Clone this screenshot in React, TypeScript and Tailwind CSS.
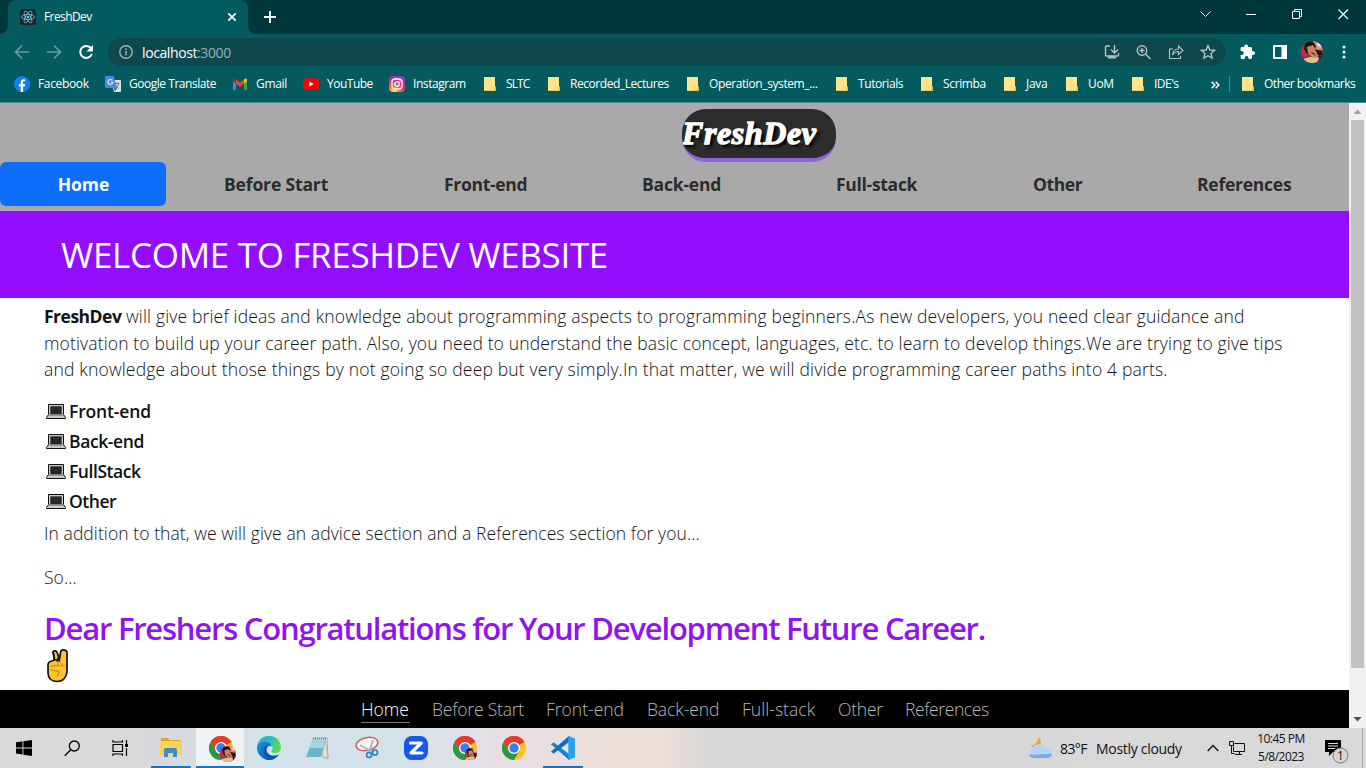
import React, { ReactNode } from 'react';

const bookmarks: { label: string; cls: string; icon: string; text: string }[] = [
  { label: 'Facebook', cls: 'w-[91px]', icon: 'fb', text: 'tracking-[-0.35px]' },
  { label: 'Google Translate', cls: 'w-[127px]', icon: 'gt', text: 'tracking-[-0.47px]' },
  { label: 'Gmail', cls: 'w-[71px]', icon: 'gm', text: 'tracking-[-0.3px]' },
  { label: 'YouTube', cls: 'w-[86px]', icon: 'yt', text: 'tracking-[-0.5px]' },
  { label: 'Instagram', cls: 'w-[93px]', icon: 'ig', text: 'tracking-[-0.43px]' },
  { label: 'SLTC', cls: 'w-[64px]', icon: 'folder', text: 'tracking-[-0.9px]' },
  { label: 'Recorded_Lectures', cls: 'w-[139px]', icon: 'folder', text: 'tracking-[-0.45px]' },
  { label: 'Operation_system_...', cls: 'w-[149px]', icon: 'folder', text: 'tracking-[-0.4px]' },
  { label: 'Tutorials', cls: 'w-[85px]', icon: 'folder', text: 'tracking-[-0.42px]' },
  { label: 'Scrimba', cls: 'w-[83px]', icon: 'folder', text: 'tracking-[-0.35px]' },
  { label: 'Java', cls: 'w-[62px]', icon: 'folder', text: 'tracking-[-0.3px]' },
  { label: 'UoM', cls: 'w-[66px]', icon: 'folder', text: 'tracking-[-0.3px]' },
  { label: "IDE's", cls: 'w-[79px]', icon: 'folder', text: 'tracking-[-0.5px]' },
];

function Folder() {
  return (
    <svg width="16" height="16" viewBox="0 0 16 16" className="shrink-0">
      <path d="M2 1h11v10.500l1-1V15H2z" fill="#ffe48b" />
      <path d="M2 14h10.500v1H2z" fill="#f5cd62" />
      <path d="M12 14l1-3.500h1V15h-2z" fill="#eebe48" />
    </svg>
  );
}

function BookmarkIcon({ kind }: { kind: string }) {
  if (kind === 'fb')
    return (
      <svg width="16" height="16" viewBox="0 0 16 16" className="shrink-0">
        <circle cx="8" cy="8" r="8" fill="#1280f5" />
        <path d="M6.700 16V10.400H4.900V8h1.800V6.300c0-2 1.100-3.100 2.900-3.100.8 0 1.500.1 1.500.1v1.900h-.9c-.9 0-1.200.5-1.200 1.200V8h2l-.4 2.400H9.100V16z" fill="#fff" />
      </svg>
    );
  if (kind === 'gt')
    return (
      <svg width="16" height="16" viewBox="0 0 16 16" className="shrink-0">
        <path d="M6 4h9a1 1 0 0 1 1 1v10a1 1 0 0 1-1 1H9z" fill="#e1e3e6" />
        <path d="M9.500 7.500h5M12 6v1.500M13.700 7.500c-.4 2.500-1.700 4-3.400 5M10.500 8.500c.8 2 2 3 3.500 4" stroke="#727981" fill="none" />
        <path d="M1 0h7.500l3.500 12H1a1 1 0 0 1-1-1V1a1 1 0 0 1 1-1z" fill="#4c84e8" />
        <path d="M7.300 4.300a2.500 2.500 0 1 0 .6 2H5.600" stroke="#e9f0ff" strokeWidth="1.100" fill="none" />
        <path d="M9 12h3l-2 3.500z" fill="#2759b8" />
      </svg>
    );
  if (kind === 'gm')
    return (
      <svg width="16" height="16" viewBox="0 0 16 16" className="shrink-0">
        <path d="M1 3.500V14h3V7z" fill="#4285f4" />
        <path d="M12 7v7h3V3.500z" fill="#34a853" />
        <path d="M4 3.500v4.300l4 3.200 4-3.200V3.500L8 6.600z" fill="#ea4335" />
        <path d="M1 4c0-2 1.700-1.800 3-.7v4.500L1 5.500z" fill="#c5221f" />
        <path d="M15 4c0-2-1.700-1.800-3-.7v4.500l3-2.300z" fill="#fbbc04" />
      </svg>
    );
  if (kind === 'yt')
    return (
      <svg width="16" height="16" viewBox="0 0 16 16" className="shrink-0">
        <rect x="0" y="2.300" width="16" height="11.400" rx="3" fill="#f00" />
        <path d="M6.300 5.500v5L10.700 8z" fill="#fff" />
      </svg>
    );
  if (kind === 'ig')
    return (
      <svg width="16" height="16" viewBox="0 0 16 16" className="shrink-0">
        <defs>
          <radialGradient id="ig" cx="0.3" cy="1" r="1.100">
            <stop offset="0.05" stopColor="#fed859" />
            <stop offset="0.350" stopColor="#fb6a3a" />
            <stop offset="0.600" stopColor="#dc2e79" />
            <stop offset="1" stopColor="#7a3bd0" />
          </radialGradient>
        </defs>
        <rect width="16" height="16" rx="4" fill="url(#ig)" />
        <rect x="3" y="3" width="10" height="10" rx="3" fill="none" stroke="#fff" strokeWidth="1.300" />
        <circle cx="8" cy="8" r="2.300" fill="none" stroke="#fff" strokeWidth="1.300" />
        <circle cx="11" cy="5" r=".7" fill="#fff" />
      </svg>
    );
  return <Folder />;
}

function Avatar({ size, id }: { size: number; id: string }) {
  return (
    <svg width={size} height={size} viewBox="0 0 22 22" className="shrink-0">
      <clipPath id={id}>
        <circle cx="11" cy="11" r="11" />
      </clipPath>
      <g clipPath={`url(#${id})`}>
        <rect width="22" height="22" fill="#8f2f33" />
        <path d="M0 6h6v10H0z" fill="#c9284f" />
        <path d="M12 0h10v9h-8z" fill="#d98779" />
        <path d="M4 3c3-4 10-3 11 3l-4 2-5 5-3-5z" fill="#24130f" />
        <path d="M6 6l6-2 4 7 2 6-5 1-6-6z" fill="#c78460" />
        <path d="M14 8l6 2 2 4-5 0z" fill="#1b1413" />
        <path d="M9 11l4 1 2 3z" fill="#3a1b15" />
        <path d="M2 18l7-2 9 1-2 5H5z" fill="#dac68d" />
        <path d="M15 3l3-2 3 4-2 2z" fill="#f3d9cd" />
        <path d="M17 15l4-2 2 5-4 2z" fill="#43221d" />
      </g>
    </svg>
  );
}

function Chrome() {
  return (
    <svg width="24" height="24" viewBox="0 0 24 24" className="shrink-0">
      <circle cx="12" cy="12" r="12" fill="#fcc31e" />
      <path d="M12 12L1.600 6A12 12 0 0 1 22.400 6z" fill="#e33b2e" />
      <path d="M12 6h10.400a12 12 0 0 0-20.800 0L6.800 15z" fill="#e33b2e" />
      <path d="M1.600 6A12 12 0 0 0 12 24l5.200-9H6.800z" fill="#279847" />
      <circle cx="12" cy="12" r="6" fill="#fff" />
      <circle cx="12" cy="12" r="4.700" fill="#3b7ded" />
    </svg>
  );
}

function TitleBar() {
  return (
    <div className="flex h-[34px] shrink-0 bg-[#00373b]">
      <div className="flex h-[34px] w-[8px] items-end bg-[#035b5f]">
        <div className="h-[34px] w-[8px] rounded-br-lg bg-[#00373b]" />
      </div>
      <div className="flex w-[240px] items-center rounded-t-lg bg-[#035b5f] pl-3 pr-[10px]">
        <svg width="16" height="16" viewBox="0 0 16 16">
          <rect width="16" height="16" rx="2" fill="#20232a" />
          <g fill="none" stroke="#61c9e6" strokeWidth=".8">
            <ellipse cx="8" cy="8" rx="6.500" ry="2.500" />
            <ellipse cx="8" cy="8" rx="6.500" ry="2.500" transform="rotate(60 8 8)" />
            <ellipse cx="8" cy="8" rx="6.500" ry="2.500" transform="rotate(120 8 8)" />
          </g>
          <circle cx="8" cy="8" r="1.300" fill="#61dafb" />
        </svg>
        <span className="ml-2 text-[12px] tracking-[-0.6px] text-white">FreshDev</span>
        <svg className="ml-auto" width="12" height="12" viewBox="0 0 12 12">
          <path d="M2.300 2.300l7.400 7.400M9.700 2.300L2.300 9.700" stroke="#fff" strokeWidth="1.700" />
        </svg>
      </div>
      <div className="h-[34px] w-[8px] bg-[#035b5f]">
        <div className="h-[34px] w-[8px] rounded-bl-lg bg-[#00373b]" />
      </div>
      <svg className="ml-[7px] mt-[10px]" width="14" height="14" viewBox="0 0 14 14">
        <path d="M7 1v12M1 7h12" stroke="#fff" strokeWidth="2" />
      </svg>
      <div className="ml-auto mr-[5px] flex">
        <svg className="mt-[9px]" width="161" height="12" viewBox="0 0 161 12" fill="none" stroke="#fff">
          <path d="M.5 2.500l5 5 5-5" />
          <path d="M46 5.500h10" />
          <path d="M92.500 2.500h7v7h-7zM94.500 2.500v-2h7v7h-2" />
          <path d="M138.500.5l9.500 9.500M148 .5L138.500 10" strokeWidth="1.200" />
        </svg>
      </div>
    </div>
  );
}

function Toolbar() {
  return (
    <div className="flex h-[36px] shrink-0 items-center bg-[#035b5f]">
      <svg className="ml-[14px]" width="80" height="16" viewBox="0 0 80 16" fill="none">
        <path d="M15 8H2M8 1.500L1.500 8 8 14.500" stroke="#6b9c9f" strokeWidth="1.700" />
        <path d="M33 8h13M40 1.500L46.500 8 40 14.500" stroke="#6b9c9f" strokeWidth="1.700" />
        <path d="M77 4.200A6 6 0 1 0 77.900 10" stroke="#fff" strokeWidth="2" />
        <path d="M79 1v6.500h-6.500z" fill="#fff" />
      </svg>
      <div className="ml-[14px] flex h-7 w-[1118px] items-center rounded-full bg-[#0e484d] pl-[11px] pr-[8px]">
        <svg width="14" height="14" viewBox="0 0 14 14" fill="none" stroke="#9fb6b8">
          <circle cx="7" cy="7" r="6.200" strokeWidth="1.400" />
          <path d="M7 6v4.500M7 3.300v1.600" strokeWidth="1.500" />
        </svg>
        <span className="ml-[9px] text-[14px] tracking-[-0.4px] text-white">
          localhost<span className="text-[#93b0b2]">:3000</span>
        </span>
        <svg className="ml-auto" width="114" height="16" viewBox="0 0 114 16" fill="none" stroke="#b5c5c6" strokeWidth="1.400">
          <path d="M6 2H2.500a1 1 0 0 0-1 1v8a1 1 0 0 0 1 1h11a1 1 0 0 0 1-1V9M10.500 1v7.500M7 5.500L10.500 9 14 5.500" />
          <path d="M4 13.500h8" strokeWidth="2" />
          <circle cx="38" cy="6.500" r="4.700" />
          <path d="M41.500 10l5 5M35.500 6.500h5M38 4v5" />
          <path d="M69 5h-3.500v9.500h11V12M68.500 11c.3-4 2.500-6 6-6V2l4.500 4.500-4.500 4v-3c-3 0-4.500 1-6 3.500z" strokeWidth="1.100" />
          <path d="M104 1.700l1.900 4.300 4.700.4-3.600 3.100 1.100 4.600-4.100-2.400-4.100 2.400L101 9.500l-3.600-3.100 4.700-.4z" />
        </svg>
      </div>
      <svg className="ml-[14px]" width="16" height="16" viewBox="0 0 16 16" fill="#fff">
        <path d="M13.200 7.300H12V4.500C12 3.700 11.400 3 10.500 3H8V2.300a1.900 1.900 0 0 0-3.800 0V3H2C1.200 3 .6 3.700.6 4.500v2.600h1.200a1.900 1.900 0 0 1 0 3.900H.6v2.600c0 .8.600 1.400 1.400 1.400h2.700v-1a1.900 1.900 0 0 1 3.800 0v1h2c.9 0 1.500-.6 1.500-1.400v-2.700h1.200a1.800 1.800 0 0 0 0-3.600z" />
      </svg>
      <svg className="ml-[17px]" width="14" height="14" viewBox="0 0 14 14">
        <path d="M1 1h12v12H1z" fill="none" stroke="#fff" strokeWidth="2" />
        <path d="M8.500 1H13v12H8.500z" fill="#fff" />
      </svg>
      <div className="ml-[14px]">
        <Avatar size={22} id="profile" />
      </div>
      <svg className="ml-[19px]" width="4" height="14" viewBox="0 0 4 14" fill="#fff">
        <circle cx="2" cy="2" r="1.500" />
        <circle cx="2" cy="7" r="1.500" />
        <circle cx="2" cy="12" r="1.500" />
      </svg>
    </div>
  );
}

function Bookmarks() {
  return (
    <div className="flex h-[33px] shrink-0 items-center whitespace-nowrap border-b border-[#4c8386] bg-[#035b5f] pb-[4px] pl-[14px] text-[12px] text-white">
      {bookmarks.map((b) => (
        <div key={b.label} className={`flex shrink-0 items-center gap-2 ${b.cls}`}>
          <BookmarkIcon kind={b.icon} />
          <span className={b.text}>{b.label}</span>
        </div>
      ))}
      <svg width="9" height="8" viewBox="0 0 9 8" fill="none" stroke="#fff" strokeWidth="1.600" className="ml-[2px] mt-px shrink-0">
        <path d="M.7.8L3.800 4 .7 7.200M4.700.8L7.800 4 4.700 7.200" />
      </svg>
      <div className="ml-[9px] mr-[10px] h-4 w-px bg-[#4f8d8f]" />
      <Folder />
      <span className="ml-2 tracking-[-0.48px]">Other bookmarks</span>
    </div>
  );
}

const navItems = [
  ['Before Start', 'ml-[58px] w-[220px] tracking-[-0.15px]'],
  ['Front-end', 'w-[198px] tracking-[-0.3px]'],
  ['Back-end', 'w-[194px] tracking-[-0.2px]'],
  ['Full-stack', 'w-[197px] tracking-[-0.3px]'],
  ['Other', 'w-[164px] tracking-[-0.4px]'],
  ['References', 'tracking-[-0.25px]'],
];

function SiteHeader() {
  return (
    <div className="h-[108px] shrink-0 bg-[#a9a9a9] pt-[6px]">
      <div className="ml-[682px] h-[53px] w-[154px] overflow-hidden rounded-[24px] border-b-4 border-[#9062dc] bg-[#2c2c2c]">
        <div className="font-['Liberation_Serif',serif] text-[32px] font-bold italic leading-[49px] tracking-[0.6px] text-white [text-shadow:3px_3px_3px_#000] [-webkit-text-stroke:1.300px_#fff]">
          FreshDev
        </div>
      </div>
      <div className="flex h-[44px] items-center whitespace-nowrap text-[17.500px] font-bold text-[#2c2c2c]">
        <div className="flex h-[44px] w-[166px] items-center justify-center rounded-md bg-[#0d6efd] pl-px text-white">Home</div>
        {navItems.map(([t, c]) => (
          <div key={t} className={`shrink-0 ${c}`}>{t}</div>
        ))}
      </div>
    </div>
  );
}

function Laptop() {
  return (
    <svg width="20" height="15" viewBox="0 0 20 15" className="mr-[3px] mt-px">
      <path d="M2.500.5h15v10l2 3v1H.5v-1l2-3z" fill="#c9c9c9" stroke="#111" />
      <path d="M4.300 2.300h11.400v8H4.300z" fill="#262626" />
      <path d="M2 11h16" stroke="#666" />
    </svg>
  );
}

function Victory() {
  return (
    <svg width="22" height="34" viewBox="0 0 22 34">
      <path
        d="M6 2.500c1.500-1.500 3.500-.5 4 1l2.500 6.500 1.200-7.500c.5-2.300 5.300-2.300 6.300.5V22c0 6-4 10.500-9.500 10.500C4.500 32.500 1 29 1 24v-8c0-2 2-4 5.500-4.500l1-1z"
        fill="#fcc333"
        stroke="#111"
        strokeWidth="1.700"
      />
      <path d="M6 3l1.500 8 4-.5" fill="none" stroke="#111" strokeWidth="1.500" />
      <path d="M9 12.500l3-8 1 8z" fill="#222" />
      <path d="M4 18c1-2 4-1.500 6-1l8-.5M11 13v3.500M4 20c2 3 6 1 8 2.500 1 1-1.500 1.500-1.500 5M15 14v3" fill="none" stroke="#d08a17" strokeWidth="1.200" />
    </svg>
  );
}

function Article() {
  return (
    <div className="flex h-[392px] shrink-0 flex-col whitespace-nowrap bg-white pl-[44px] pt-[5px] text-[17.500px] text-[#101214]">
      <div className="h-[80px] font-light leading-[26.500px]">
        <div className="tracking-[0.16px]">
          <b className="font-bold tracking-[-0.5px]">FreshDev</b> will give brief ideas and knowledge about programming aspects to programming beginners.As new developers, you need clear guidance and
        </div>
        <div className="tracking-[0.14px]">
          motivation to build up your career path. Also, you need to understand the basic concept, languages, etc. to learn to develop things.We are trying to give tips
        </div>
        <div className="tracking-[0.18px]">
          and knowledge about those things by not going so deep but very simply.In that matter, we will divide programming career paths into 4 parts.
        </div>
      </div>
      <div className="mt-[13px] pl-[2px] font-semibold">
        {[
          ['Front-end', 'tracking-[-0.15px]'],
          ['Back-end', 'tracking-[-0.4px]'],
          ['FullStack', 'tracking-[-0.45px]'],
          ['Other', 'tracking-[-0.45px]'],
        ].map(([t, c]) => (
          <div key={t} className={`flex h-[30px] items-center ${c}`}>
            <Laptop />
            {t}
          </div>
        ))}
      </div>
      <div className="mt-[4px] h-[26px] font-light leading-[26px] tracking-[0.08px]">In addition to that, we will give an advice section and a References section for you...</div>
      <div className="mt-[18px] h-[26px] font-light leading-[26px] tracking-[0.08px]">So...</div>
      <div className="mt-[19px] h-[38px] text-[31px] font-semibold leading-[38px] tracking-[-1.220px] text-[#9114ee]">
        Dear Freshers Congratulations for Your Development Future Career.
      </div>
      <div className="mt-[2px] pl-[3px]">
        <Victory />
      </div>
    </div>
  );
}

const footerItems = [
  ['Before Start', 'w-[114px] tracking-[-0.2px]'],
  ['Front-end', 'w-[101px] tracking-[0px]'],
  ['Back-end', 'w-[95px] tracking-[-0.1px]'],
  ['Full-stack', 'w-[96px] tracking-[0.05px]'],
  ['Other', 'w-[67px] tracking-[-0.2px]'],
  ['References', 'tracking-[-0.4px]'],
];

function SiteFooter() {
  return (
    <div className="flex h-[38px] shrink-0 whitespace-nowrap bg-black pl-[361px] pt-[6px] text-[17.500px] font-light leading-[26px] text-[#b9b9b9]">
      <div className="mr-[22px] h-[27px] w-[49px] border-b border-[#777] text-white">Home</div>
      {footerItems.map(([t, c]) => (
        <div key={t} className={c}>{t}</div>
      ))}
    </div>
  );
}

function Scrollbar() {
  return (
    <div className="flex w-[17px] shrink-0 flex-col items-center bg-[#f1f1f1]">
      <svg width="17" height="17" viewBox="0 0 17 17">
        <path d="M4.500 11L8.500 6.500 12.500 11z" fill="#a3a3a3" />
      </svg>
      <div className="h-[548px] w-[13px] bg-[#c1c1c1]" />
      <svg className="mt-auto" width="17" height="17" viewBox="0 0 17 17">
        <path d="M4.500 6h8l-4 4.500z" fill="#505050" />
      </svg>
    </div>
  );
}

function TaskItem({ children, cls = '' }: { children?: ReactNode; cls?: string }) {
  return <div className={`flex h-[40px] shrink-0 items-center justify-center ${cls}`}>{children}</div>;
}

function ChromeWithProfile({ big, id }: { big?: boolean; id: string }) {
  return (
    <div className="relative">
      <Chrome />
      <div className={big ? 'absolute -bottom-[2px] -right-[3px]' : 'absolute bottom-0 right-0'}>
        <Avatar size={big ? 16 : 12} id={id} />
      </div>
    </div>
  );
}

function Taskbar() {
  return (
    <div className="flex h-[40px] shrink-0 bg-[linear-gradient(90deg,#dad8d9_0px,#d8d8dc_150px,#d3e2e8_250px,#d2e3e9_390px,#e4dfe6_480px,#eddfda_600px,#ecdfd9_660px,#d8d8d8_710px,#d9d8da_1366px)]">
      <TaskItem cls="w-[48px]">
        <svg width="16" height="16" viewBox="0 0 16 16" fill="#000">
          <path d="M0 2.300l6.500-.9v6.100H0zM7.400 1.300L16 0v7.500H7.400zM0 8.400h6.500v6.100L0 13.600zM7.400 8.400H16V16l-8.600-1.300z" />
        </svg>
      </TaskItem>
      <TaskItem cls="w-[48px]">
        <svg width="16" height="17" viewBox="0 0 16 17" fill="none" stroke="#000" strokeWidth="1.300">
          <circle cx="10.300" cy="6" r="5" />
          <path d="M6.800 9.700L.7 15.800" />
        </svg>
      </TaskItem>
      <TaskItem cls="w-[48px]">
        <svg width="17" height="16" viewBox="0 0 17 16" fill="none" stroke="#000" strokeWidth="1.200">
          <path d="M1 4.500h9.500v7H1zM1 0v2h9.500V0M1 16v-2h9.500v2M14.500 0v4M14.500 8v8" />
          <path d="M13 4h3v3h-3z" fill="#000" stroke="none" />
        </svg>
      </TaskItem>
      <TaskItem cls="ml-[7px] w-[40px] border-b-2 border-[#1177cc]">
        <svg width="22" height="20" viewBox="0 0 22 20">
          <path d="M1 1h7l2 2h11v3H1z" fill="#e5a41e" />
          <path d="M0 4h21a1 1 0 0 1 1 1v13H0z" fill="#fbd35a" />
          <path d="M4 18v-5c0-1 .7-2 2-2h9c1.300 0 2 1 2 2v7h-4v-4H8v4H4z" fill="#3d8ed0" />
        </svg>
      </TaskItem>
      <TaskItem cls="ml-[5px] w-[48px] border-b-2 border-[#1177cc] bg-[#f0f3f5] pl-[1px] pt-[2px]">
        <ChromeWithProfile big id="chrome-active" />
      </TaskItem>
      <TaskItem cls="w-[49px]">
        <svg width="24" height="24" viewBox="0 0 24 24">
          <defs>
            <linearGradient id="edge-a" x1="0" y1="0" x2="1" y2=".3">
              <stop offset="0" stopColor="#2a9fe0" />
              <stop offset=".6" stopColor="#2cc3b9" />
              <stop offset="1" stopColor="#5fd65c" />
            </linearGradient>
            <linearGradient id="edge-b" x1="0" y1="0" x2="1" y2="1">
              <stop offset="0" stopColor="#1791dc" />
              <stop offset="1" stopColor="#0c4fa3" />
            </linearGradient>
          </defs>
          <path d="M0 12A12 12 0 0 1 24 11.500c0 4-3 5.500-6 5.500-3.500 0-4-1.500-3.300-2.500 3-4-2-8.500-7-7C3 8.800.5 11 0 12z" fill="url(#edge-a)" />
          <path d="M0 12c0-4 4-6.300 8-6.300 4.500 0 7 2.800 7 5.800 0-2-5-2.500-5.500 2-.4 4.500 6 8.500 12.500 5A12 12 0 0 1 0 12z" fill="url(#edge-b)" />
          <path d="M8.500 9.500C4 14 7 22.500 14 23.800c3-.5 6-2.300 8-5.300-6.500 3.500-12.900-.5-12.500-5 .1-1.500.8-2.500 1.700-3z" fill="#0a57ac" />
        </svg>
      </TaskItem>
      <TaskItem cls="w-[49px]">
        <svg width="24" height="22" viewBox="0 0 24 22">
          <path d="M8 1h13l1 20H18z" fill="#f7f7f4" stroke="#8d9798" strokeWidth=".7" />
          <path d="M7 2h13l-5 18H0z" fill="#6bb3c8" />
          <path d="M7 2h13l-2.500 9H3.500z" fill="#a2d5e0" />
          <path d="M7 1.500h13" stroke="#777" strokeWidth="1.300" strokeDasharray="1 1" />
          <path d="M19.500 3.500l2.500 17-6-1z" fill="#e5e3dc" stroke="#888" strokeWidth=".5" />
        </svg>
      </TaskItem>
      <TaskItem cls="w-[49px]">
        <svg width="24" height="24" viewBox="0 0 24 24" fill="none">
          <ellipse cx="12" cy="8" rx="11" ry="6.500" fill="#f2f4f6" stroke="#d95b63" strokeWidth="1.500" transform="rotate(-12 12 8)" />
          <path d="M5 9l12 7M18 4l-4 13" stroke="#a6b2bd" strokeWidth="1.800" />
          <circle cx="14" cy="19" r="2.500" stroke="#2c82c4" strokeWidth="1.700" />
          <circle cx="20" cy="16.500" r="2.500" stroke="#2c82c4" strokeWidth="1.700" />
        </svg>
      </TaskItem>
      <TaskItem cls="w-[49px]">
        <svg width="24" height="24" viewBox="0 0 24 24">
          <rect width="24" height="24" rx="8" fill="#1657ec" />
          <path d="M6.500 7h10.700L7 17h11" fill="none" stroke="#fff" strokeWidth="3.200" strokeLinejoin="round" strokeLinecap="round" />
        </svg>
      </TaskItem>
      <TaskItem cls="w-[49px]">
        <ChromeWithProfile id="chrome-second" />
      </TaskItem>
      <TaskItem cls="w-[49px]">
        <Chrome />
      </TaskItem>
      <TaskItem cls="ml-[5px] w-[40px] border-b-2 border-[#1177cc] pt-[2px]">
        <svg width="24" height="24" viewBox="0 0 24 24">
          <path d="M18 24L1.500 9.500 0 8.500 2.500 6.200 18 18z" fill="#1686cc" />
          <path d="M18 0L0 15.500l2.500 2.300L18 6z" fill="#0b70b5" />
          <path d="M18 0l6 2.700v18.600L18 24l-.7-1V1z" fill="#2ba2ec" />
        </svg>
      </TaskItem>
      <div className="ml-auto flex items-center whitespace-nowrap text-[#111]">
        <svg width="25" height="24" viewBox="0 0 25 24">
          <path d="M9 1c5 3 3 9-2 10C4 11.500 1 10 1 9c5 1 8-3 8-8z" fill="#f3a52e" transform="translate(1 0)" />
          <path d="M6 22a5 5 0 0 1-1-9.500C6 8 13 6 16 12c5-2 9 3 8 6-.5 3-3 4-5 4z" fill="#b9d3f7" />
          <path d="M6 22a5 5 0 0 1-5-4c4 2 17-1 23 0-.5 3-3 4-5 4z" fill="#7fa9e8" />
        </svg>
        <span className="ml-[7px] w-[36px] text-[14px] tracking-[-0.6px]">83°F</span>
        <span className="w-[111px] text-[14px] tracking-[-0.3px]">Mostly cloudy</span>
        <svg width="12" height="8" viewBox="0 0 12 8" fill="none" stroke="#111" strokeWidth="1.300">
          <path d="M.7 7L6 1.500 11.300 7" />
        </svg>
        <svg className="ml-[10px]" width="17" height="15" viewBox="0 0 17 15" fill="none" stroke="#111">
          <path d="M5.500 2.500h10v8H4.500v-5M10.500 10.500v3M6 13.500h7M.5.500h4v4h-4zM2.500 4.500v8h3" />
        </svg>
        <div className="ml-[9px] w-[52px] text-center text-[12px] leading-[18px] tracking-[-0.5px]">
          <div>10:45 PM</div>
          <div>5/8/2023</div>
        </div>
        <div className="relative ml-[18px] mr-[13px] mt-[7px] h-[24px] w-[24px]">
          <svg width="24" height="24" viewBox="0 0 24 24">
            <path d="M0 0h16v12H8l-4 4v-4H0z" fill="#000" />
            <path d="M3 3.500h10M3 6h10M3 8.500h7" stroke="#ddd" />
            <circle cx="15.500" cy="15.500" r="7.500" fill="#d4d4d5" stroke="#777" />
          </svg>
          <span className="absolute left-[8px] top-[8px] w-[15px] text-center text-[12px] leading-[15px]">1</span>
        </div>
        <div className="mr-[3px] h-[40px] w-px bg-[#aaa]" />
      </div>
    </div>
  );
}

export default function App() {
  return (
    <div className="flex h-[768px] w-[1366px] flex-col overflow-hidden bg-white font-['Open_Sans','Noto_Sans',sans-serif]">
      <TitleBar />
      <Toolbar />
      <Bookmarks />
      <div className="flex h-[625px] shrink-0">
        <div className="flex w-[1349px] shrink-0 flex-col overflow-hidden">
          <SiteHeader />
          <div className="flex h-[87px] shrink-0 items-center bg-[#930dff] pl-[61px] pt-[2px] text-[35px] tracking-[-0.33px] text-white">
            <span className="whitespace-nowrap">WELCOME TO FRESHDEV WEBSITE</span>
          </div>
          <Article />
          <SiteFooter />
        </div>
        <Scrollbar />
      </div>
      <Taskbar />
    </div>
  );
}
